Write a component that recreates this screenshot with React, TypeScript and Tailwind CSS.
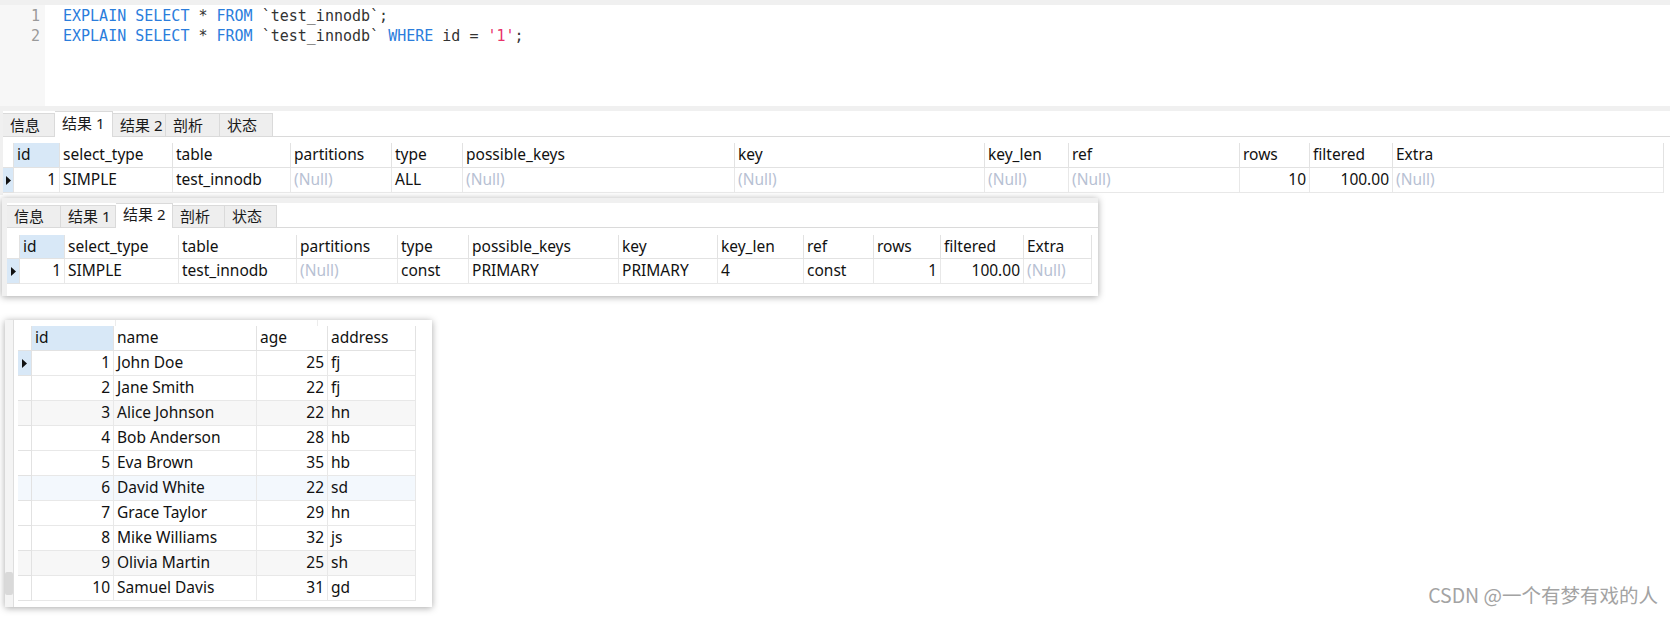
import React from 'react';

type Col = { n: string; w: string; r?: boolean };
type Tab = { label: string; w: string };

const ui = "font-['Noto_Sans','Noto_Sans_CJK_SC',sans-serif]";
const mono = "font-['DejaVu_Sans_Mono','Liberation_Mono',monospace]";

const colsTop: Col[] = [
	{ n: 'id', w: 'w-[46px]', r: true },
	{ n: 'select_type', w: 'w-[113px]' },
	{ n: 'table', w: 'w-[118px]' },
	{ n: 'partitions', w: 'w-[101px]' },
	{ n: 'type', w: 'w-[71px]' },
	{ n: 'possible_keys', w: 'w-[272px]' },
	{ n: 'key', w: 'w-[250px]' },
	{ n: 'key_len', w: 'w-[84px]' },
	{ n: 'ref', w: 'w-[171px]' },
	{ n: 'rows', w: 'w-[70px]', r: true },
	{ n: 'filtered', w: 'w-[83px]', r: true },
	{ n: 'Extra', w: 'w-[271px]' },
];

const colsMid: Col[] = [
	{ n: 'id', w: 'w-[45px]', r: true },
	{ n: 'select_type', w: 'w-[114px]' },
	{ n: 'table', w: 'w-[118px]' },
	{ n: 'partitions', w: 'w-[101px]' },
	{ n: 'type', w: 'w-[71px]' },
	{ n: 'possible_keys', w: 'w-[150px]' },
	{ n: 'key', w: 'w-[99px]' },
	{ n: 'key_len', w: 'w-[86px]' },
	{ n: 'ref', w: 'w-[70px]' },
	{ n: 'rows', w: 'w-[67px]', r: true },
	{ n: 'filtered', w: 'w-[83px]', r: true },
	{ n: 'Extra', w: 'w-[68px]' },
];

const colsUsers: Col[] = [
	{ n: 'id', w: 'w-[82px]', r: true },
	{ n: 'name', w: 'w-[143px]' },
	{ n: 'age', w: 'w-[71px]', r: true },
	{ n: 'address', w: 'w-[88px]' },
];

const users: (string | null)[][] = [
	['1', 'John Doe', '25', 'fj'],
	['2', 'Jane Smith', '22', 'fj'],
	['3', 'Alice Johnson', '22', 'hn'],
	['4', 'Bob Anderson', '28', 'hb'],
	['5', 'Eva Brown', '35', 'hb'],
	['6', 'David White', '22', 'sd'],
	['7', 'Grace Taylor', '29', 'hn'],
	['8', 'Mike Williams', '32', 'js'],
	['9', 'Olivia Martin', '25', 'sh'],
	['10', 'Samuel Davis', '31', 'gd'],
];

// row tints seen in the screenshot (striped / hovered rows)
const rowTint: Record<number, string> = { 2: 'bg-[#f7f7f7]', 5: 'bg-[#f3f8fd]', 8: 'bg-[#f7f7f7]' };

const Arrow = () => (
	<svg width="5" height="9" viewBox="0 0 5 9">
		<polygon points="0,0 5,4.5 0,9" fill="#111" />
	</svg>
);

const Tabs: React.FC<{ items: Tab[]; active: number; h: string }> = ({ items, active, h }) => (
	<div className={`flex ${h} border-b border-[#dadada] text-[15px] text-[#1a1a1a] ${ui}`}>
		{items.map((t, i) =>
			i === active ? (
				<div key={t.label} className={`${t.w} bg-white border-r border-t border-[#dadada] pl-[7px] pb-[3px] flex items-center -mb-px`}>
					{t.label}
				</div>
			) : (
				<div key={t.label} className={`${t.w} mt-[2px] bg-[#eeeeee] border-r border-t border-[#dadada] pl-[7px] flex items-center`}>
					{t.label}
				</div>
			)
		)}
	</div>
);

const Grid: React.FC<{ cols: Col[]; rows: (string | null)[][]; ind: string; headH: string; tints?: Record<number, string> }> = ({
	cols,
	rows,
	ind,
	headH,
	tints = {},
}) => (
	<div className={`flex flex-col text-[15.5px] text-[#111] ${ui}`}>
		<div className={`flex ${headH}`}>
			<div className={`${ind} shrink-0 border-r border-b border-[#e2e2e2]`} />
			{cols.map((c, i) => (
				<div
					key={c.n}
					className={`${c.w} shrink-0 border-r border-b border-[#e2e2e2] px-[3px] flex items-center ${i === 0 ? 'bg-[#d8e8f7]' : ''}`}
				>
					{c.n}
				</div>
			))}
		</div>
		{rows.map((r, ri) => (
			<div key={ri} className={`flex h-[25px] ${tints[ri] ?? ''}`}>
				<div
					className={`${ind} shrink-0 border-r border-b border-[#e2e2e2] flex items-center justify-center ${ri === 0 ? 'bg-[#d8e8f7]' : ''}`}
				>
					{ri === 0 && <Arrow />}
				</div>
				{cols.map((c, ci) => (
					<div
						key={c.n}
						className={`${c.w} shrink-0 border-r border-b border-[#e8e8e8] px-[3px] flex items-center whitespace-nowrap ${
							c.r ? 'justify-end' : ''
						} ${r[ci] === null ? 'text-[#b7c1d3]' : ''}`}
					>
						{r[ci] ?? '(Null)'}
					</div>
				))}
			</div>
		))}
	</div>
);

const K = ({ children }: { children: React.ReactNode }) => <span className="text-[#2b7ddc]">{children}</span>;

export default function App() {
	return (
		<div className="relative w-full h-[620px] bg-white overflow-hidden">
			{/* sql editor */}
			<div className="h-[5px] bg-[#f0f0f0]" />
			<div className={`flex h-[101px] text-[15px] leading-[19.5px] ${mono}`}>
				<div className="w-[45px] bg-[#f7f7f7] pt-[2px] pr-[5px] text-right text-[#9a9a9a]">
					<div>1</div>
					<div>2</div>
				</div>
				<div className="pl-[18px] pt-[2px] text-[#333] whitespace-pre">
					<div>
						<K>EXPLAIN SELECT</K> * <K>FROM</K> `test_innodb`;
					</div>
					<div>
						<K>EXPLAIN SELECT</K> * <K>FROM</K> `test_innodb` <K>WHERE</K> id = <span className="text-[#e8336b]">'1'</span>;
					</div>
				</div>
			</div>

			{/* result 1 */}
			<div className="bg-[#f0f0f0] pt-[5px] pl-[3px] h-[89px]">
				<div className="bg-white h-full">
					<Tabs
						h="h-[26px]"
						active={1}
						items={[
							{ label: '信息', w: 'w-[52px]' },
							{ label: '结果 1', w: 'w-[58px]' },
							{ label: '结果 2', w: 'w-[53px]' },
							{ label: '剖析', w: 'w-[54px]' },
							{ label: '状态', w: 'w-[53px]' },
						]}
					/>
					<div className="pt-[6px]">
						<Grid
							cols={colsTop}
							ind="w-[11px]"
							headH="h-[25px]"
							rows={[['1', 'SIMPLE', 'test_innodb', null, 'ALL', null, null, null, null, '10', '100.00', null]]}
						/>
					</div>
				</div>
			</div>

			{/* result 2 */}
			<div className="ml-[2px] mt-[3px] w-[1096px] h-[98px] bg-[#f0f0f0] pt-[5px] pl-[5px] shadow-[0_1px_7px_rgba(0,0,0,0.35)]">
				<div className="bg-white h-full">
					<Tabs
						h="h-[25px]"
						active={2}
						items={[
							{ label: '信息', w: 'w-[54px]' },
							{ label: '结果 1', w: 'w-[55px]' },
							{ label: '结果 2', w: 'w-[57px]' },
							{ label: '剖析', w: 'w-[52px]' },
							{ label: '状态', w: 'w-[52px]' },
						]}
					/>
					<div className="pt-[7px]">
						<Grid
							cols={colsMid}
							ind="w-[13px]"
							headH="h-[24px]"
							rows={[['1', 'SIMPLE', 'test_innodb', null, 'const', 'PRIMARY', 'PRIMARY', '4', 'const', '1', '100.00', null]]}
						/>
					</div>
				</div>
			</div>

			{/* user table */}
			<div className="ml-[5px] mt-[24px] w-[427px] h-[287px] flex bg-white shadow-[0_1px_7px_rgba(0,0,0,0.35)]">
				<div className="w-[9px] shrink-0 bg-[#f4f4f4] border-r border-[#dedede] flex flex-col">
					<div className="mt-[252px] h-[23px] w-[8px] rounded-[2px] bg-[#d9d9d9]" />
				</div>
				<div className="pl-[4px] flex flex-col">
					<div className="h-[6px] flex">
						<div className="w-[98px] border-r border-[#ececec]" />
						<div className="w-[202px] border-r border-[#ececec]" />
					</div>
					<Grid cols={colsUsers} rows={users} ind="w-[14px]" headH="h-[25px]" tints={rowTint} />
				</div>
			</div>

			{/* watermark */}
			<div className="absolute right-[12px] bottom-[11px] text-[19.5px] text-[#a3a3a3] font-['Noto_Sans_CJK_SC',sans-serif] whitespace-nowrap">
				CSDN @一个有梦有戏的人
			</div>
		</div>
	);
}
